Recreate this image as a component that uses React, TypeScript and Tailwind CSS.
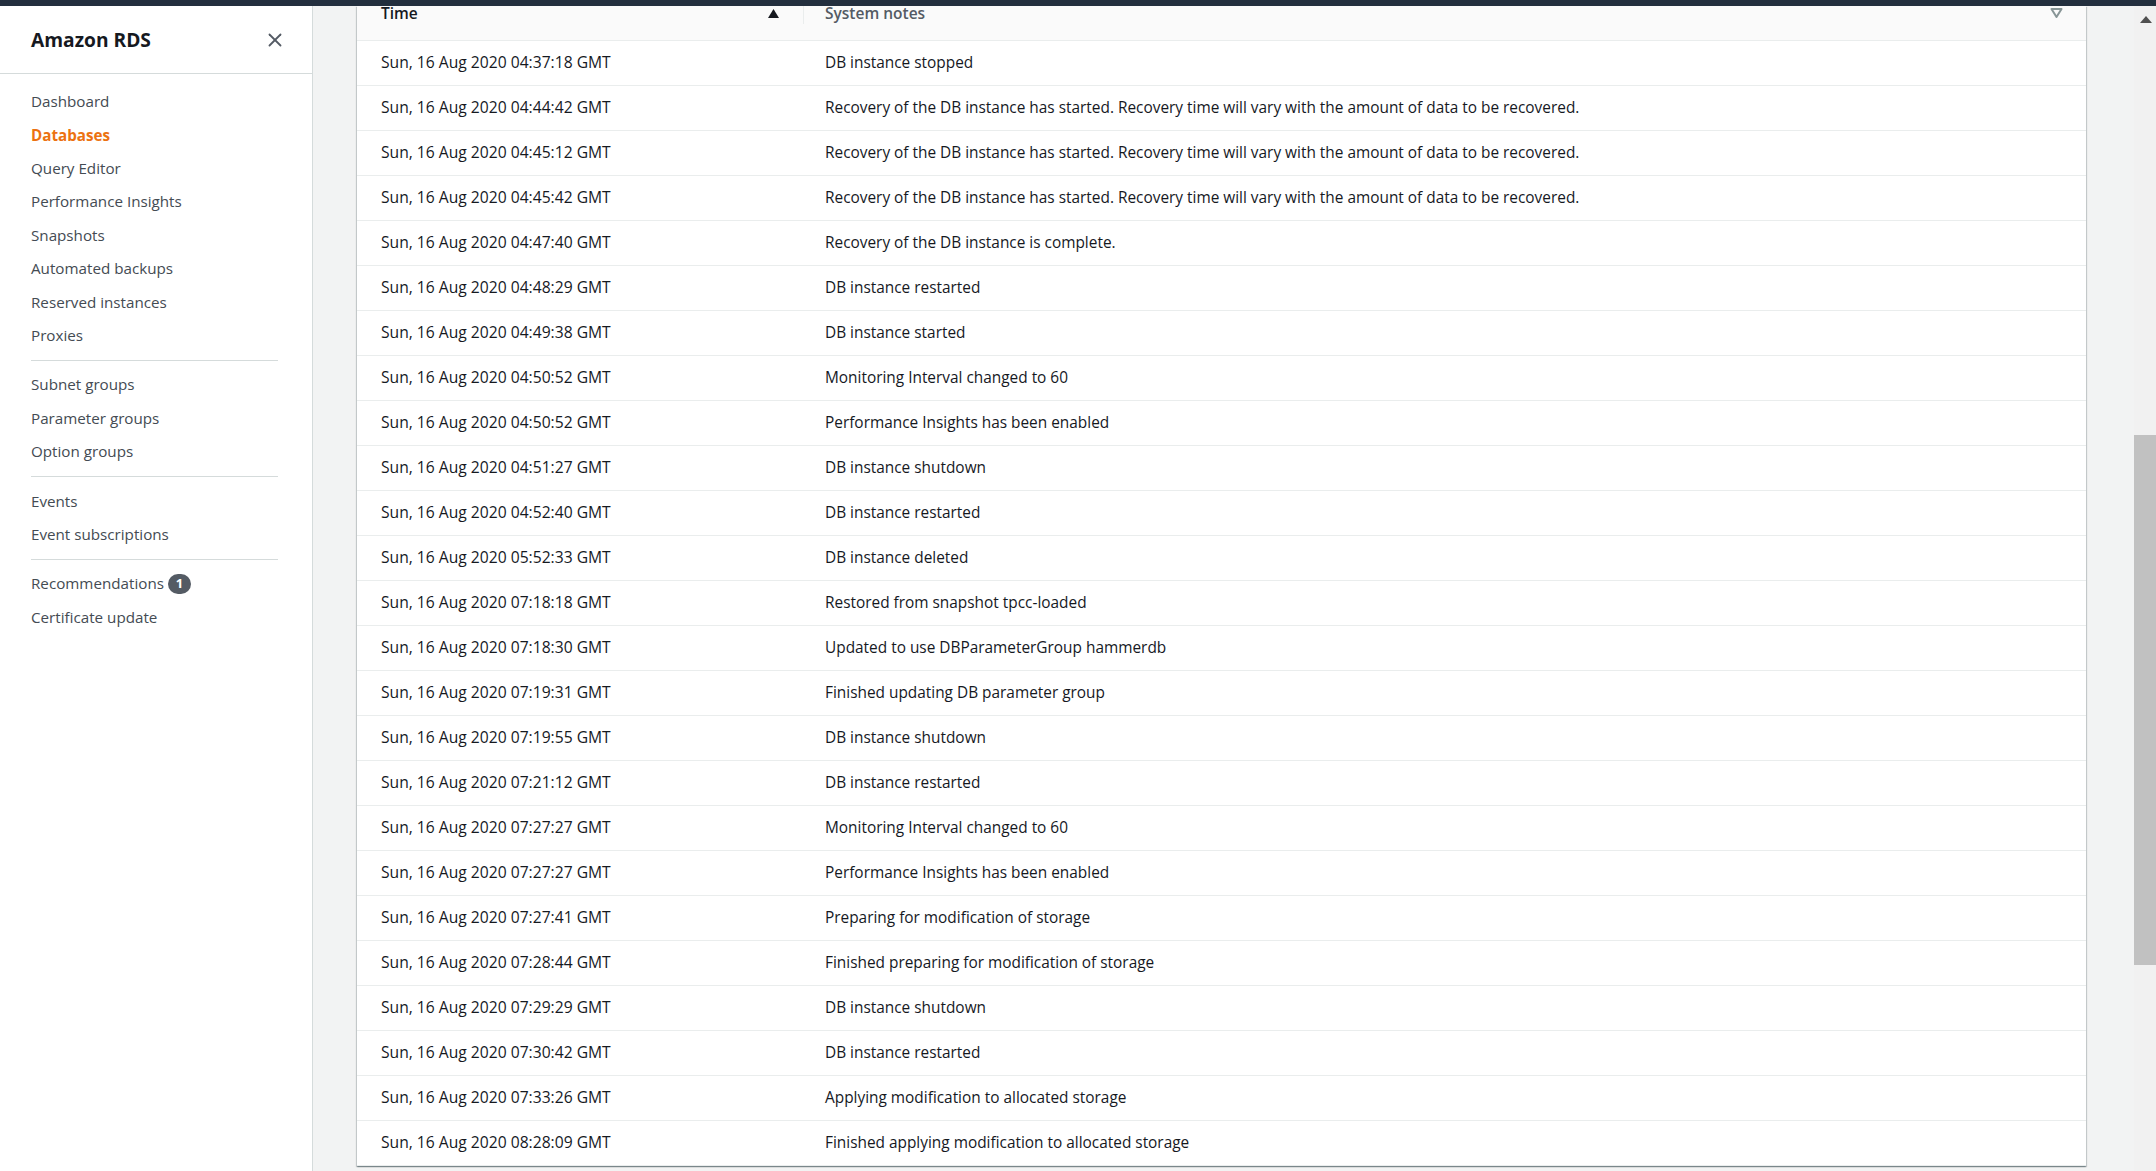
import React from 'react';
import { X } from 'lucide-react';

type NavItem = { label: string; active?: boolean; badge?: string } | 'divider';

const navItems: NavItem[] = [
  { label: 'Dashboard' },
  { label: 'Databases', active: true },
  { label: 'Query Editor' },
  { label: 'Performance Insights' },
  { label: 'Snapshots' },
  { label: 'Automated backups' },
  { label: 'Reserved instances' },
  { label: 'Proxies' },
  'divider',
  { label: 'Subnet groups' },
  { label: 'Parameter groups' },
  { label: 'Option groups' },
  'divider',
  { label: 'Events' },
  { label: 'Event subscriptions' },
  'divider',
  { label: 'Recommendations', badge: '1' },
  { label: 'Certificate update' },
];

const events: [string, string][] = [
  ['04:37:18', 'DB instance stopped'],
  ['04:44:42', 'Recovery of the DB instance has started. Recovery time will vary with the amount of data to be recovered.'],
  ['04:45:12', 'Recovery of the DB instance has started. Recovery time will vary with the amount of data to be recovered.'],
  ['04:45:42', 'Recovery of the DB instance has started. Recovery time will vary with the amount of data to be recovered.'],
  ['04:47:40', 'Recovery of the DB instance is complete.'],
  ['04:48:29', 'DB instance restarted'],
  ['04:49:38', 'DB instance started'],
  ['04:50:52', 'Monitoring Interval changed to 60'],
  ['04:50:52', 'Performance Insights has been enabled'],
  ['04:51:27', 'DB instance shutdown'],
  ['04:52:40', 'DB instance restarted'],
  ['05:52:33', 'DB instance deleted'],
  ['07:18:18', 'Restored from snapshot tpcc-loaded'],
  ['07:18:30', 'Updated to use DBParameterGroup hammerdb'],
  ['07:19:31', 'Finished updating DB parameter group'],
  ['07:19:55', 'DB instance shutdown'],
  ['07:21:12', 'DB instance restarted'],
  ['07:27:27', 'Monitoring Interval changed to 60'],
  ['07:27:27', 'Performance Insights has been enabled'],
  ['07:27:41', 'Preparing for modification of storage'],
  ['07:28:44', 'Finished preparing for modification of storage'],
  ['07:29:29', 'DB instance shutdown'],
  ['07:30:42', 'DB instance restarted'],
  ['07:33:26', 'Applying modification to allocated storage'],
  ['08:28:09', 'Finished applying modification to allocated storage'],
];

const Sidebar = () => (
  <aside className="w-[313px] shrink-0 bg-white border-r border-[#d5dbdb] flex flex-col">
    <div className="h-[68px] border-b border-[#d5dbdb] flex items-center justify-between pl-[31px] pr-[26px]">
      <h2 className="text-[19.2px] font-bold text-[#16191f] leading-none">Amazon RDS</h2>
      <X size={22} strokeWidth={2} className="text-[#545b64]" />
    </div>
    <nav className="pt-[11px] pl-[31px] pr-[34px]">
      {navItems.map((item, i) =>
        item === 'divider' ? (
          <div key={i} className="mt-[8px] mb-[7px] h-px bg-[#d5dbdb]" />
        ) : (
          <div key={i} className="h-[33.4px] flex items-center gap-[4px]">
            <span
              className={
                item.active
                  ? 'text-[15.2px] font-bold text-[#ec7211]'
                  : 'text-[15.2px] text-[#444b53]'
              }
            >
              {item.label}
            </span>
            {item.badge && (
              <span className="min-w-[23px] h-[20px] px-[6px] rounded-full bg-[#545b64] text-white text-[13px] font-bold flex items-center justify-center">
                {item.badge}
              </span>
            )}
          </div>
        )
      )}
    </nav>
  </aside>
);

const EventsTable = () => (
  <div className="bg-white shadow-[0_1px_1px_0_rgba(0,28,36,0.3),1px_1px_1px_0_rgba(0,28,36,0.15),-1px_1px_1px_0_rgba(0,28,36,0.15)]">
    <div className="h-[35px] flex bg-[#fafafa] border-b border-[#eaeded]">
      <div className="w-[446px] shrink-0 flex items-start justify-between pl-[24px] pr-[24px]">
        <span className="text-[15.5px] font-semibold text-[#16191f] leading-[14px]">Time</span>
        <svg width="11" height="9" viewBox="0 0 11 9" className="mt-[3px]">
          <path d="M5.5 0 L11 9 L0 9 Z" fill="#16191f" />
        </svg>
      </div>
      <div className="w-px h-[18px] bg-[#eaeded]" />
      <div className="flex-1 flex items-start justify-between pl-[21px] pr-[23px]">
        <span className="text-[15.5px] font-semibold text-[#545b64] leading-[14px]">System notes</span>
        <svg width="13" height="10" viewBox="0 0 13 10" className="mt-[2px]">
          <path d="M1.5 1 L11.5 1 L6.5 9 Z" fill="none" stroke="#879596" strokeWidth="2" strokeLinejoin="round" />
        </svg>
      </div>
    </div>
    {events.map(([t, note], i) => (
      <div key={i} className="h-[45px] flex items-center border-b border-[#eaeded] text-[#16191f]">
        <div className="w-[447px] shrink-0 pl-[24px] text-[15.65px]">Sun, 16 Aug 2020 {t} GMT</div>
        <div className="flex-1 pl-[21px] text-[15.4px]">{note}</div>
      </div>
    ))}
  </div>
);

const Scrollbar = () => (
  <div className="w-[22px] shrink-0 bg-[#f1f1f1] flex flex-col items-center">
    <svg width="12" height="7" viewBox="0 0 12 7" className="mt-[10px] ml-[2px]">
      <path d="M6 0 L12 7 L0 7 Z" fill="#505050" />
    </svg>
    <div className="mt-[412px] w-full h-[530px] bg-[#c1c1c1]" />
  </div>
);

export default function App() {
  return (
    <div
      className="w-[2156px] h-[1171px] overflow-hidden flex flex-col bg-[#f2f3f3]"
      style={{ fontFamily: '"Open Sans", "Noto Sans", sans-serif' }}
    >
      <div className="h-[6px] shrink-0 bg-[#232f3e]" />
      <div className="flex flex-1 min-h-0">
        <Sidebar />
        <main className="flex-1 min-w-0 pl-[44px] pr-[48px]">
          <EventsTable />
        </main>
        <Scrollbar />
      </div>
    </div>
  );
}
